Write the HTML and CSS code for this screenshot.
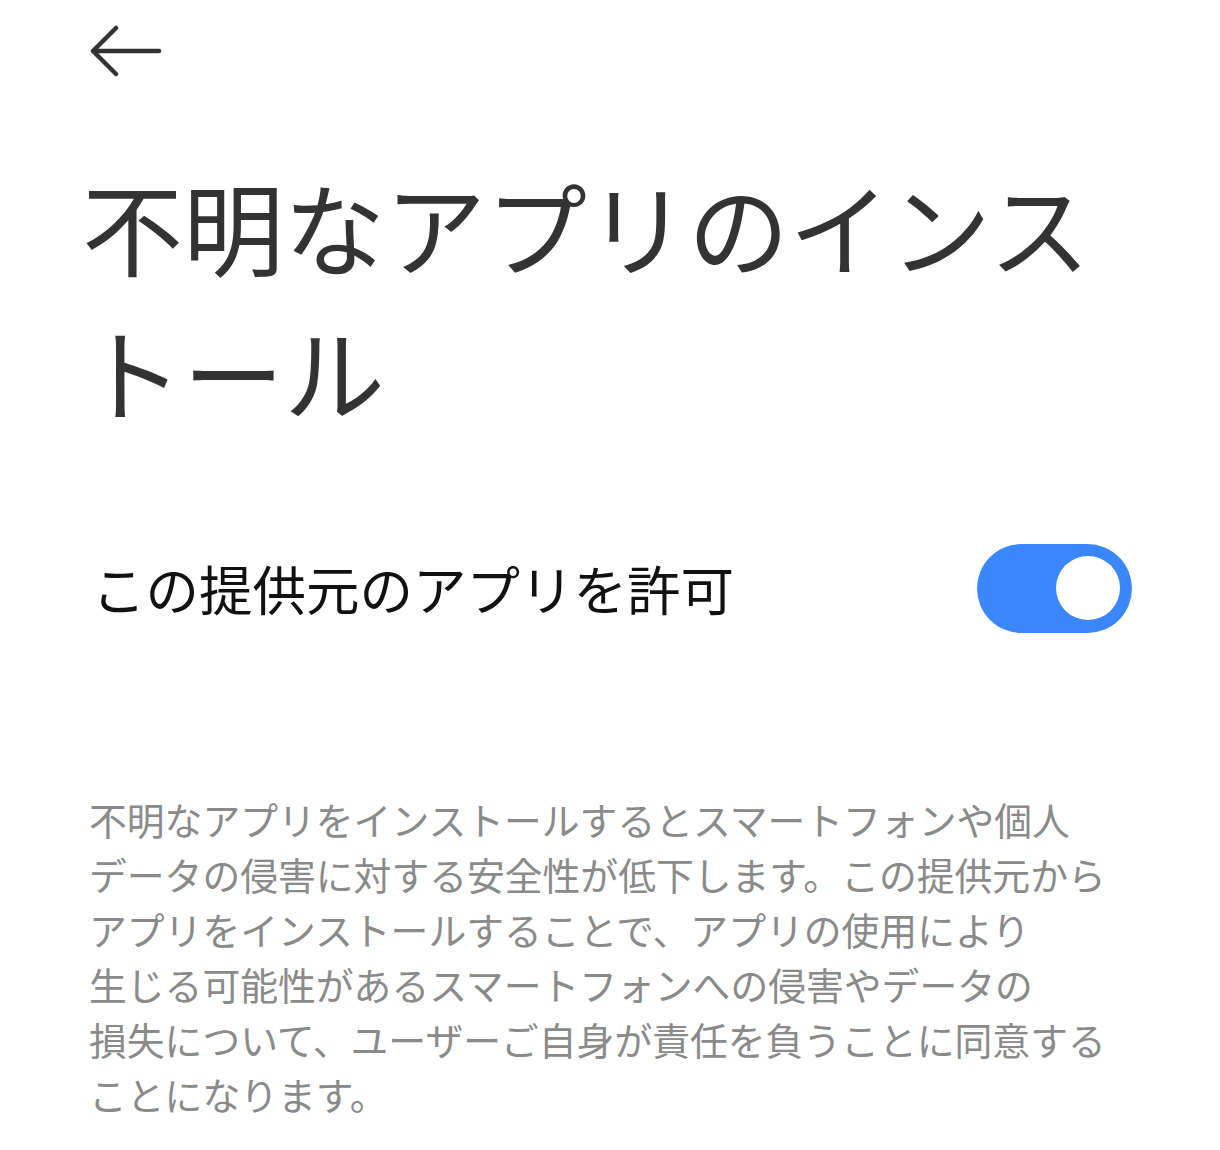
FILE: index.html
```html
<!DOCTYPE html>
<html lang="ja">
<head>
<meta charset="utf-8">
<link rel="stylesheet" href="styles.css">
</head>
<body>
<div class="page">
  <header class="topbar">
    <svg class="back" width="72" height="54" viewBox="0 0 72 54" aria-label="戻る">
      <path d="M26 3 L3 26 L26 49 M3 26 H69" fill="none" stroke="#333" stroke-width="4.5" stroke-linecap="round" stroke-linejoin="round"/>
    </svg>
  </header>
  <h1 class="title">不明なアプリのインストール</h1>
  <div class="row">
    <span class="row-label">この提供元のアプリを許可</span>
    <div class="switch"><div class="knob"></div></div>
  </div>
  <p class="note">不明なアプリをインストールするとスマートフォンや個人<br>データの侵害に対する安全性が低下します。この提供元から<br>アプリをインストールすることで、アプリの使用により<br>生じる可能性があるスマートフォンへの侵害やデータの<br>損失について、ユーザーご自身が責任を負うことに同意する<br>ことになります。</p>
</div>
</body>
</html>
```

FILE: styles.css
```css
html, body {
  margin: 0;
  padding: 0;
  background: #ffffff;
}
body {
  font-family: "Noto Sans CJK JP", "Noto Sans", sans-serif;
  width: 1220px;
  height: 1150px;
  overflow: hidden;
}
.page {
  padding: 0 88px 0 90px;
}
.topbar {
  height: 104px;
  display: flex;
  align-items: center;
}
.back {
  display: block;
  margin-left: 0;
}
.title {
  margin: 49px 0 0 -8px;
  font-size: 101px;
  line-height: 145px;
  font-weight: 400;
  color: #333333;
  width: 1070px;
  letter-spacing: 0;
}
.row {
  margin-top: 85px;
  height: 120px;
  display: flex;
  align-items: center;
  justify-content: space-between;
}
.row-label {
  font-size: 53.5px;
  color: #111111;
  margin-left: 2px;
  line-height: 1;
}
.switch {
  width: 155px;
  height: 89px;
  border-radius: 45px;
  background: #3a86fc;
  display: flex;
  align-items: center;
  justify-content: flex-end;
  padding-right: 12px;
  box-sizing: border-box;
}
.knob {
  width: 64px;
  height: 64px;
  border-radius: 50%;
  background: #ffffff;
}
.note {
  margin: 143px 0 0 -1px;
  font-size: 37.8px;
  line-height: 55px;
  color: #8a8a8a;
  white-space: nowrap;
}
```
